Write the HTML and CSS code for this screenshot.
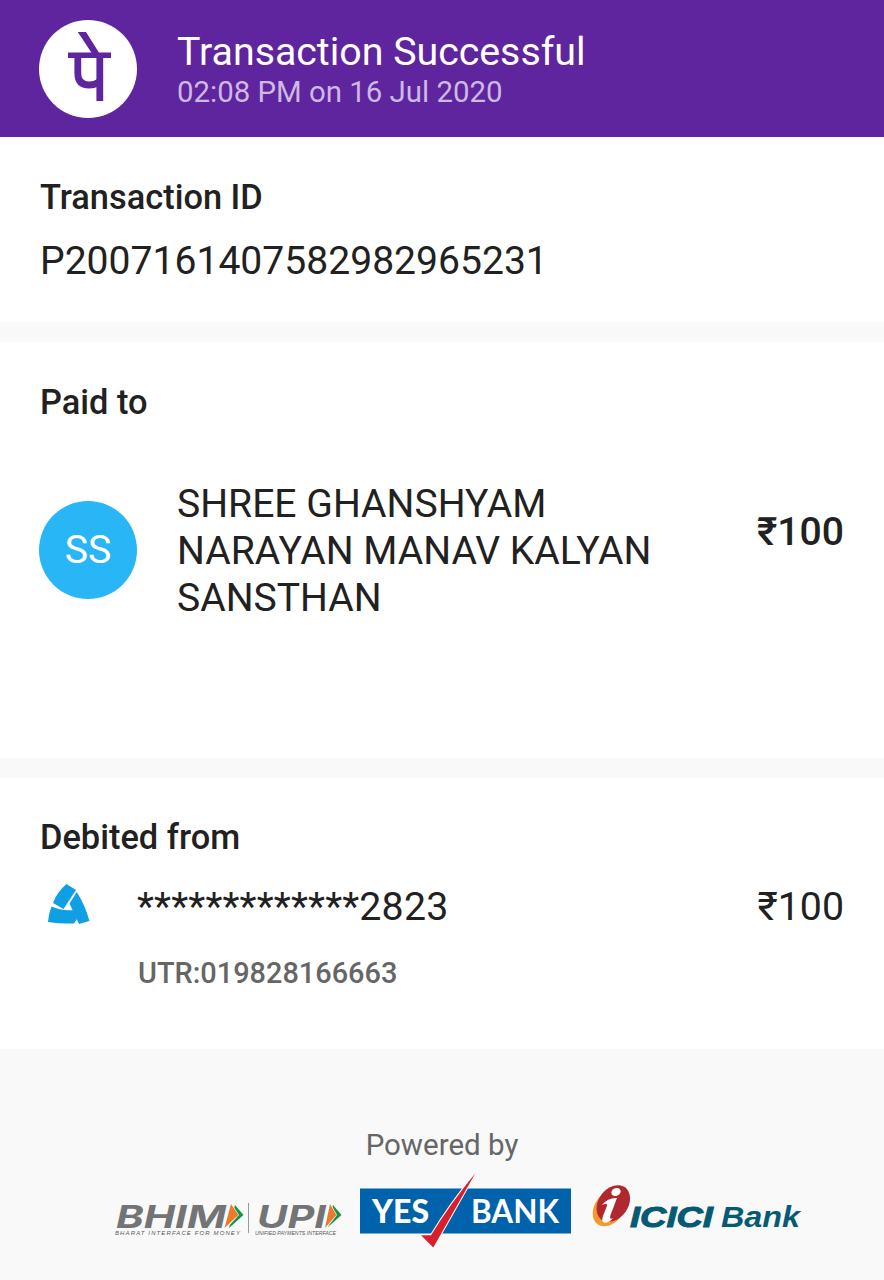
FILE: index.html
```
<!DOCTYPE html>
<html lang="en">
<head>
    <meta charset="UTF-8">
    <meta name="viewport" content="width=device-width, initial-scale=1.0">
    <title>Transaction Successful</title>
    <link rel="stylesheet" href="styles.css">
</head>
<body>

    <header>
        <svg class="logo" viewBox="0 0 98 98">
            <circle cx="49" cy="49" r="49" fill="#fff"/>
            <g fill="none" stroke="#5f259f" stroke-width="6.8">
                <path d="M29 35.2H72" stroke-width="5.4"/>
                <path d="M38.8 35V53Q38.8 65 50 65Q57 65 61 61"/>
                <path d="M60.8 34V81"/>
            </g>
            <path d="M38.8 12H47L60.5 33.5H53Z" fill="#5f259f"/>
        </svg>
        <div class="status">
            <h1>Transaction Successful</h1>
            <p>02:08 PM on 16 Jul 2020</p>
        </div>
    </header>

    <main>
        <section class="transaction">
            <h2>Transaction ID</h2>
            <p class="transaction-id">P2007161407582982965231</p>
        </section>

        <section class="paid">
            <h2>Paid to</h2>
            <div class="payee">
                <div class="avatar">SS</div>
                <p class="name">SHREE GHANSHYAM NARAYAN MANAV KALYAN SANSTHAN</p>
                <p class="amount">₹100</p>
            </div>
        </section>

        <section class="debited">
            <h2>Debited from</h2>
            <div class="account">
                <svg class="bank" viewBox="0 0 44 42">
                    <g fill="#0f9fe4">
                        <path d="M19.5 1L29 7L16.5 26L6 20Q10 9 19.5 1Z"/>
                        <path d="M29.8 9Q38 22 42.5 38L32 41L22.5 20.5Z"/>
                        <path d="M4.5 23.5Q14 28 26.5 27L30.5 35L27 40.5Q13 41 1 39Q1.5 31 4.5 23.5Z"/>
                    </g>
                </svg>
                <p class="number">*************2823</p>
                <p class="debit">₹100</p>
            </div>
            <p class="utr">UTR:019828166663</p>
        </section>
    </main>

    <footer>
        <p>Powered by</p>
        <div class="partners">
            <svg class="upi" viewBox="0 0 228 36">
                <g class="upi-name">
                    <text x="2" y="24.5" textLength="110" lengthAdjust="spacingAndGlyphs">BHIM</text>
                    <text x="143" y="24.5" textLength="69" lengthAdjust="spacingAndGlyphs">UPI</text>
                </g>
                <g class="upi-tag">
                    <text x="1" y="31.5" textLength="125" lengthAdjust="spacing">BHARAT INTERFACE FOR MONEY</text>
                    <text x="141" y="31.5" textLength="81" lengthAdjust="spacingAndGlyphs">UNIFIED PAYMENTS INTERFACE</text>
                </g>
                <path d="M134.5 0V30" stroke="#999" stroke-width="1"/>
                <path d="M121 2L129.5 12L115 25Z" fill="#159447"/>
                <path d="M117.5 0.5L125 12L112 26Z" fill="#f8f8f8"/>
                <path d="M117 1L124.3 12L110.5 25Z" fill="#ef7926"/>
                <path d="M219 2L227.5 12L214 24Z" fill="#159447"/>
                <path d="M216.5 0.5L223 12L212 26Z" fill="#f8f8f8"/>
                <path d="M216 1L222.3 12L211 25Z" fill="#ef7926"/>
            </svg>
            <svg class="yes" viewBox="0 0 212 74">
                <path d="M0 14.5H211V59.5H0Z" fill="#0062ab"/>
                <text class="yes-bold" x="12" y="49" textLength="57" lengthAdjust="spacingAndGlyphs">YES</text>
                <text class="yes-light" x="111" y="49" textLength="88" lengthAdjust="spacingAndGlyphs">BANK</text>
                <path class="tick" d="M115.5 -1L73.3 73.5L61 61.2H71Q90 30 115.5 -1Z"/>
            </svg>
            <svg class="icici" viewBox="0 0 212 44">
                <ellipse cx="18.3" cy="23" rx="14.5" ry="20" transform="rotate(36 18.3 23)" fill="#f49a2c"/>
                <ellipse cx="22.3" cy="18.5" rx="14.8" ry="20" transform="rotate(36 22.3 18.5)" fill="#b0272e"/>
                <ellipse cx="25" cy="7" rx="4.8" ry="3.9" transform="rotate(-25 25 7)" fill="#fff"/>
                <path d="M11 20Q17 12.5 26 13L19.5 30Q18 35.5 22 33Q18 38.5 13 37.5Q10 36.5 12 31L16.5 19.5Q14 18.5 11 20Z" fill="#fff"/>
                <text class="icici-name" x="39" y="42" textLength="83" lengthAdjust="spacingAndGlyphs">ICICI</text>
                <text class="icici-bank" x="130" y="42" textLength="79" lengthAdjust="spacingAndGlyphs">Bank</text>
            </svg>
        </div>
    </footer>

</body>
</html>
```
FILE: styles.css
```
* {
    box-sizing: border-box;
}
body {
    font-family: Roboto, sans-serif;
    margin: 0;
    background-color: #f9f9f9;
    color: #212121;
    display: flex;
    flex-direction: column;
    height: 1280px;
}
h1, h2, p {
    margin: 0;
    font-weight: 400;
}
header {
    background-color: #5f259f;
    color: #fff;
    height: 137px;
    padding: 20px 39px;
    display: flex;
    gap: 40px;
}
.logo {
    width: 98px;
    height: 98px;
}
.status {
    padding-top: 9px;
}
.status h1 {
    font-size: 39.3px;
    line-height: 46px;
}
.status p {
    font-size: 29.4px;
    line-height: 34px;
    color: #cdb9e2;
}
main {
    display: flex;
    flex-direction: column;
    gap: 20px;
}
section {
    background-color: #fff;
    padding: 40px 40px 0;
}
h2 {
    font-size: 34.4px;
    font-weight: 500;
    line-height: 40px;
}
.transaction {
    height: 185px;
}
.transaction-id {
    font-size: 39.1px;
    line-height: 46px;
    margin-top: 21px;
}
.paid {
    height: 416px;
}
.payee {
    display: flex;
    margin-top: 59px;
}
.avatar {
    width: 98px;
    height: 98px;
    margin: 20px 40px 0 -1px;
    border-radius: 50%;
    background-color: #29b6f6;
    color: #fff;
    font-size: 39.3px;
    line-height: 98px;
    text-align: center;
}
.name {
    width: 500px;
    font-size: 39.1px;
    line-height: 47px;
}
.amount {
    margin: 28px 0 0 auto;
    font-size: 39.1px;
    font-weight: 500;
    line-height: 46px;
}
.debited {
    height: 271px;
    padding-top: 39px;
}
.account {
    display: flex;
    align-items: center;
    margin-top: 27px;
    height: 46px;
}
.bank {
    width: 44px;
    height: 42px;
    margin: -6px 46px 0 7px;
}
.number, .debit {
    font-size: 39.3px;
    line-height: 46px;
}
.number {
    letter-spacing: 0.18px;
}
.debit {
    margin-left: auto;
}
.utr {
    margin: 25px 0 0 98px;
    font-size: 28.9px;
    font-weight: 500;
    line-height: 36px;
    color: #666;
}
footer {
    padding-top: 78px;
}
footer p {
    font-size: 29.5px;
    line-height: 36px;
    color: #666;
    text-align: center;
}
.partners {
    display: flex;
    align-items: flex-start;
    padding: 11px 0 0 114px;
}
.upi {
    width: 228px;
    height: 36px;
    margin-top: 29px;
    overflow: visible;
}
.upi-name {
    font: italic 700 31px Inter, sans-serif;
    fill: #737475;
}
.upi-tag {
    font: italic 400 6px "Liberation Sans", sans-serif;
    fill: #55575a;
}
.yes {
    width: 212px;
    height: 74px;
    margin-left: 18px;
    overflow: visible;
}
.yes-bold {
    font: 900 32px Lato, sans-serif;
    fill: #fff;
}
.yes-light {
    font: 700 32px Lato, sans-serif;
    fill: #fff;
}
.tick {
    fill: #d91f2c;
    stroke: #fff;
    stroke-width: 2;
    paint-order: stroke;
}
.icici {
    width: 212px;
    height: 44px;
    margin: 11px 0 0 19px;
    overflow: visible;
}
.icici-name, .icici-bank {
    font: italic 700 30px "Liberation Sans", sans-serif;
    fill: #055b73;
}
.icici-name {
    stroke: #055b73;
    stroke-width: 1;
}
```
